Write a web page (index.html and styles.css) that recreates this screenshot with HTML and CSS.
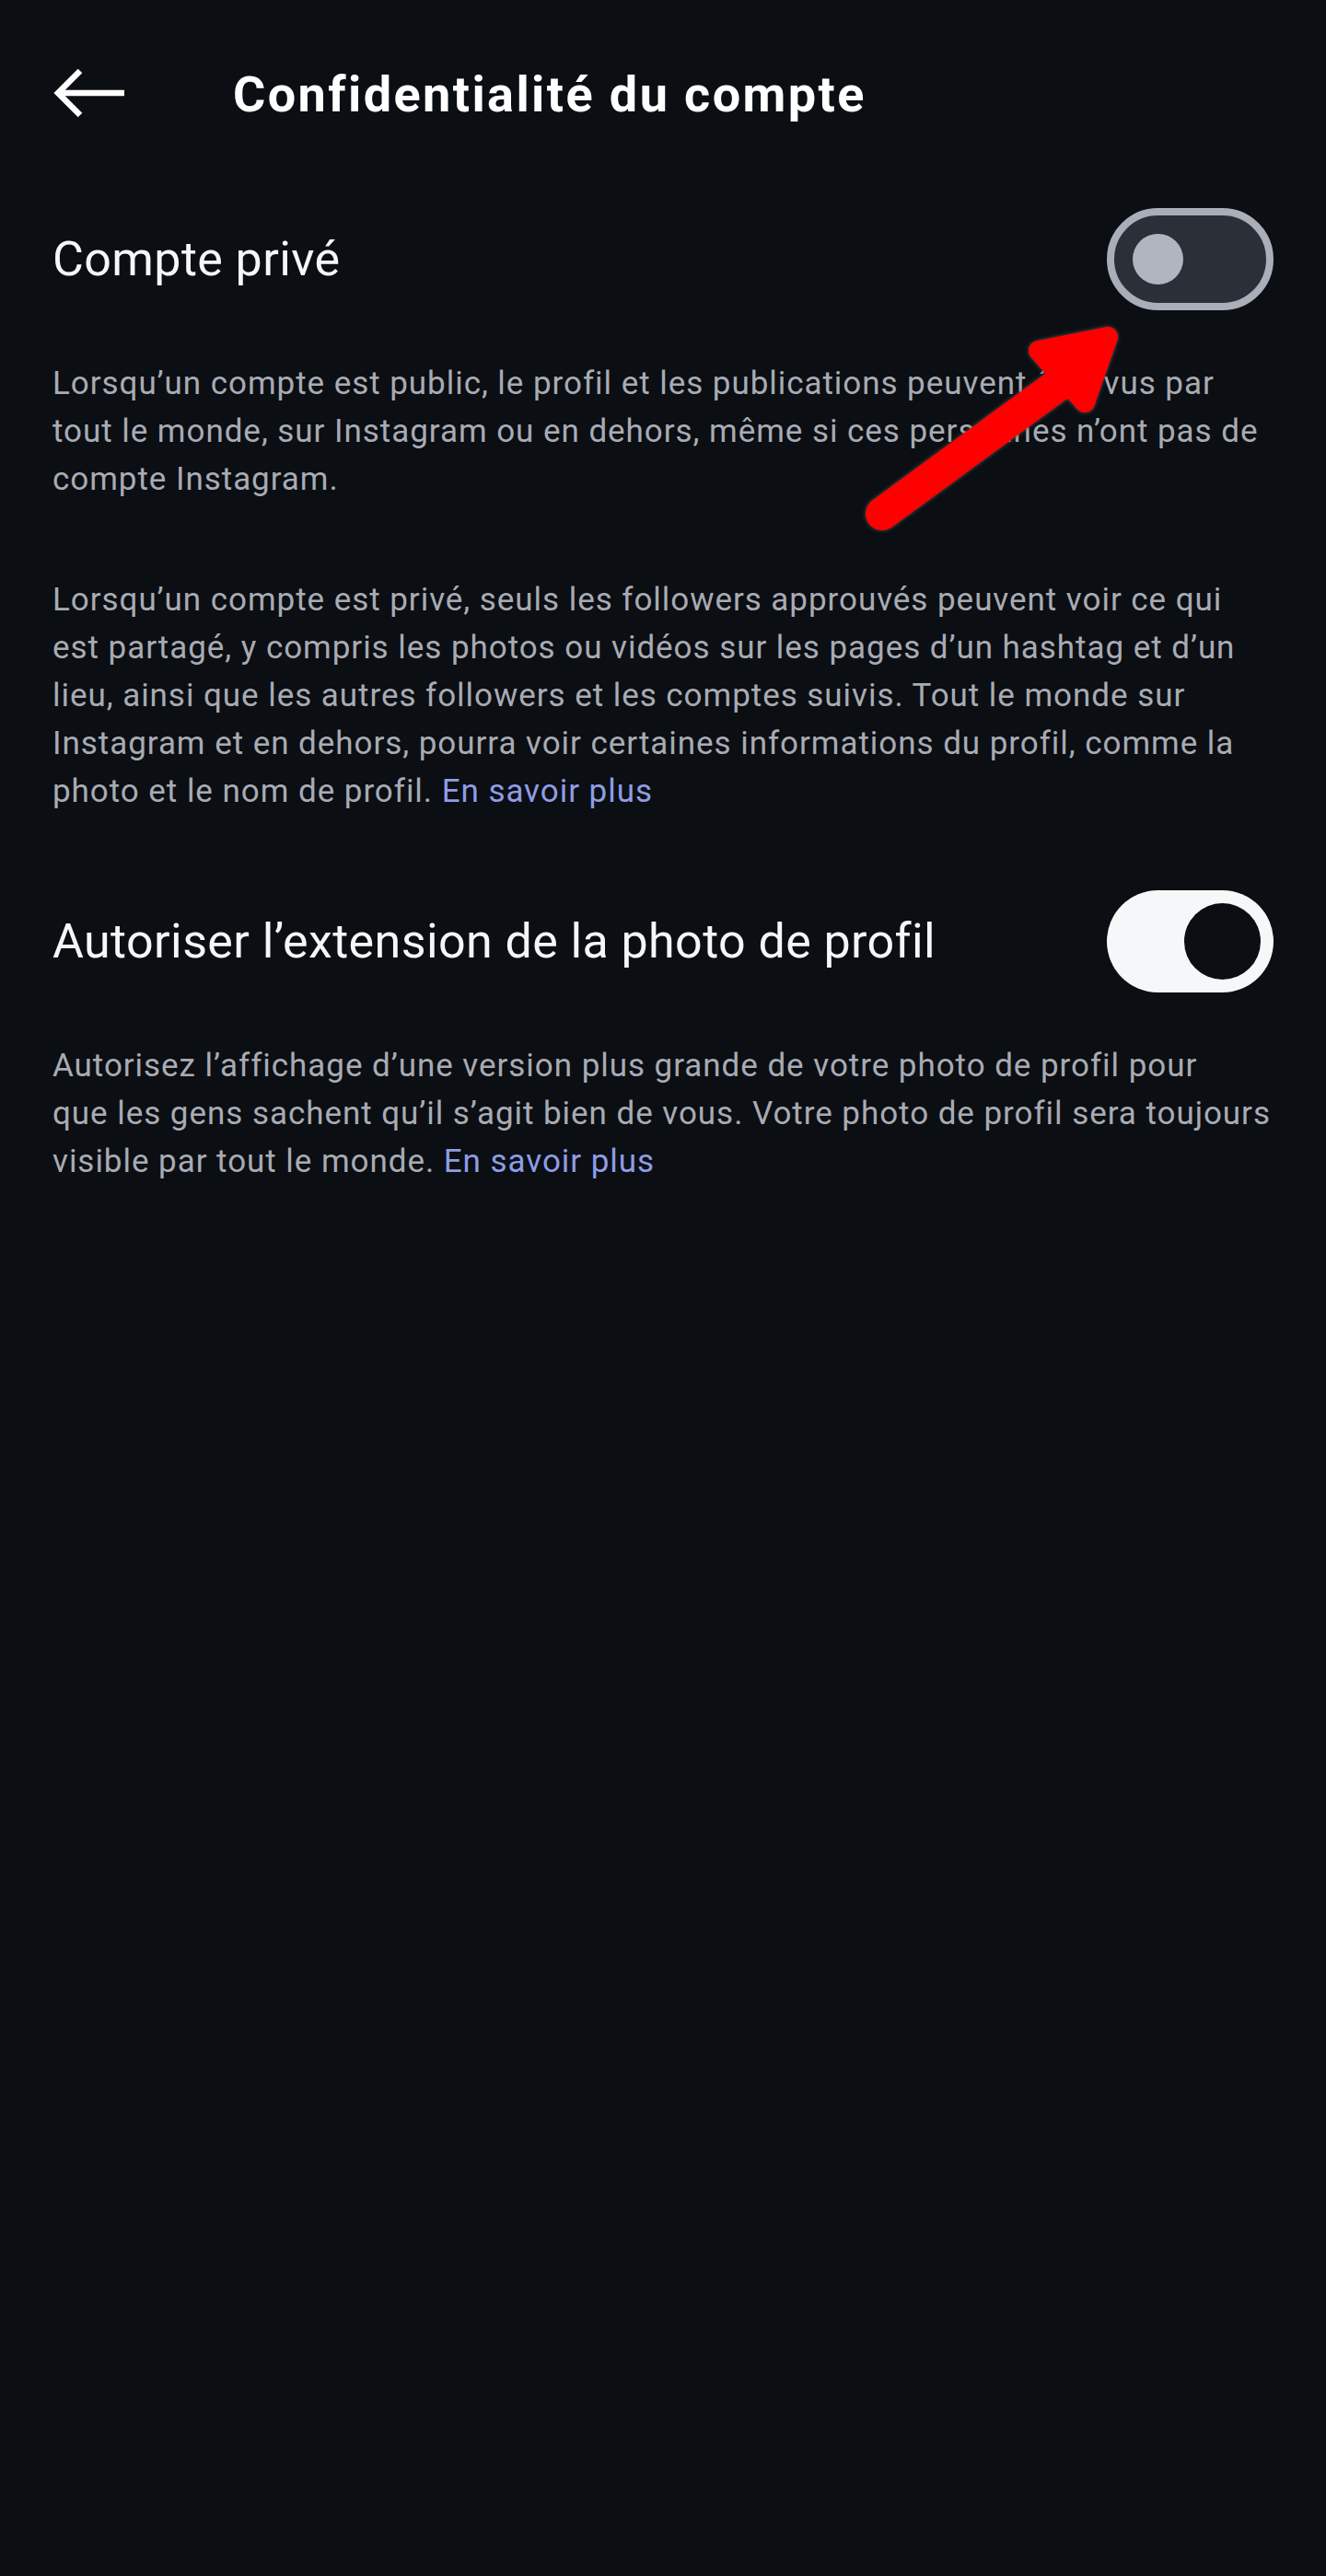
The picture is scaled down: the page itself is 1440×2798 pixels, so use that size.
FILE: index.html
```html
<!DOCTYPE html>
<html lang="fr">
<head>
  <meta charset="UTF-8">
  <meta name="viewport" content="width=device-width, initial-scale=1.0">
  <title>Confidentialité du compte</title>
  <link rel="stylesheet" href="styles.css">
</head>
<body>

<div class="page">
  <div class="header">
    <svg class="back" width="80" height="56" viewBox="0 0 80 56">
      <path d="M78 27H6M30 3L6 27l24 24" fill="none" stroke="#fff" stroke-width="6.5"/>
    </svg>
    <h1>Confidentialité du compte</h1>
  </div>

  <div class="row row-first">
    <span class="label">Compte privé</span>
    <div class="toggle off"><span class="knob"></span></div>
  </div>

  <p class="desc desc-first">Lorsqu’un compte est public, le profil et les publications peuvent être vus par<br>
    tout le monde, sur Instagram ou en dehors, même si ces personnes n’ont pas de<br>
    compte Instagram.</p>

  <p class="desc desc-second">Lorsqu’un compte est privé, seuls les followers approuvés peuvent voir ce qui<br>
    est partagé, y compris les photos ou vidéos sur les pages d’un hashtag et d’un<br>
    lieu, ainsi que les autres followers et les comptes suivis. Tout le monde sur<br>
    Instagram et en dehors, pourra voir certaines informations du profil, comme la<br>
    photo et le nom de profil. <a href="#">En savoir plus</a></p>

  <div class="row row-second">
    <span class="label">Autoriser l’extension de la photo de profil</span>
    <div class="toggle on"><span class="knob"></span></div>
  </div>

  <p class="desc desc-first">Autorisez l’affichage d’une version plus grande de votre photo de profil pour<br>
    que les gens sachent qu’il s’agit bien de vous. Votre photo de profil sera toujours<br>
    visible par tout le monde. <a href="#">En savoir plus</a></p>

  <!-- flèche rouge ajoutée sur la capture -->
  <svg class="annot" width="1440" height="700" viewBox="0 0 1440 700">
    <line x1="958" y1="558" x2="1160" y2="410" stroke="#ff0000" stroke-width="36" stroke-linecap="round"/>
    <polygon points="1128,381 1203,366 1178,437" fill="#ff0000" stroke="#ff0000" stroke-width="22" stroke-linejoin="round"/>
  </svg>
</div>

</body>
</html>
```

FILE: styles.css
```css
body {
  margin: 0;
  background-color: #0b0e13;
  font-family: Roboto, "Liberation Sans", sans-serif;
  color: #f5f6f7;
}

.page {
  position: relative;
  width: 1440px;
  min-height: 2798px;
  padding: 0 57px;
  box-sizing: border-box;
}

.header {
  display: flex;
  align-items: center;
  height: 204px;
}

.back {
  flex-shrink: 0;
}

.header h1 {
  margin: 0 0 0 116px;
  font-size: 54px;
  font-weight: 700;
  letter-spacing: 2.4px;
  color: #fff;
}

.row {
  display: flex;
  align-items: center;
  justify-content: space-between;
}

.row-first {
  margin-top: 22px;
}

.row-second {
  margin-top: 81px;
}

.label {
  font-size: 52px;
  letter-spacing: 0.4px;
  color: #f5f6f7;
}

.toggle {
  width: 181px;
  height: 111px;
  border-radius: 56px;
  box-sizing: border-box;
  display: flex;
  align-items: center;
  flex-shrink: 0;
}

.toggle.off {
  background-color: #2b2f37;
  border: 8px solid #a9aeb9;
  padding-left: 20px;
}

.toggle.off .knob {
  width: 55px;
  height: 55px;
  border-radius: 50%;
  background-color: #b1b5bf;
}

.toggle.on {
  background-color: #f6f7f8;
  justify-content: flex-end;
  padding-right: 14px;
}

.toggle.on .knob {
  width: 83px;
  height: 83px;
  border-radius: 50%;
  background-color: #0b0e13;
}

.desc {
  margin: 0;
  padding-top: 1px;
  font-size: 35px;
  line-height: 52px;
  letter-spacing: 0.95px;
  white-space: nowrap;
  color: #a8abb3;
}

.desc-first {
  margin-top: 53px;
}

.desc-second {
  margin-top: 78px;
}

.desc a {
  color: #8e9de4;
  text-decoration: none;
}

.annot {
  position: absolute;
  left: 0;
  top: 0;
  filter: drop-shadow(0 0 2px rgba(90, 90, 90, 0.9));
}
```
